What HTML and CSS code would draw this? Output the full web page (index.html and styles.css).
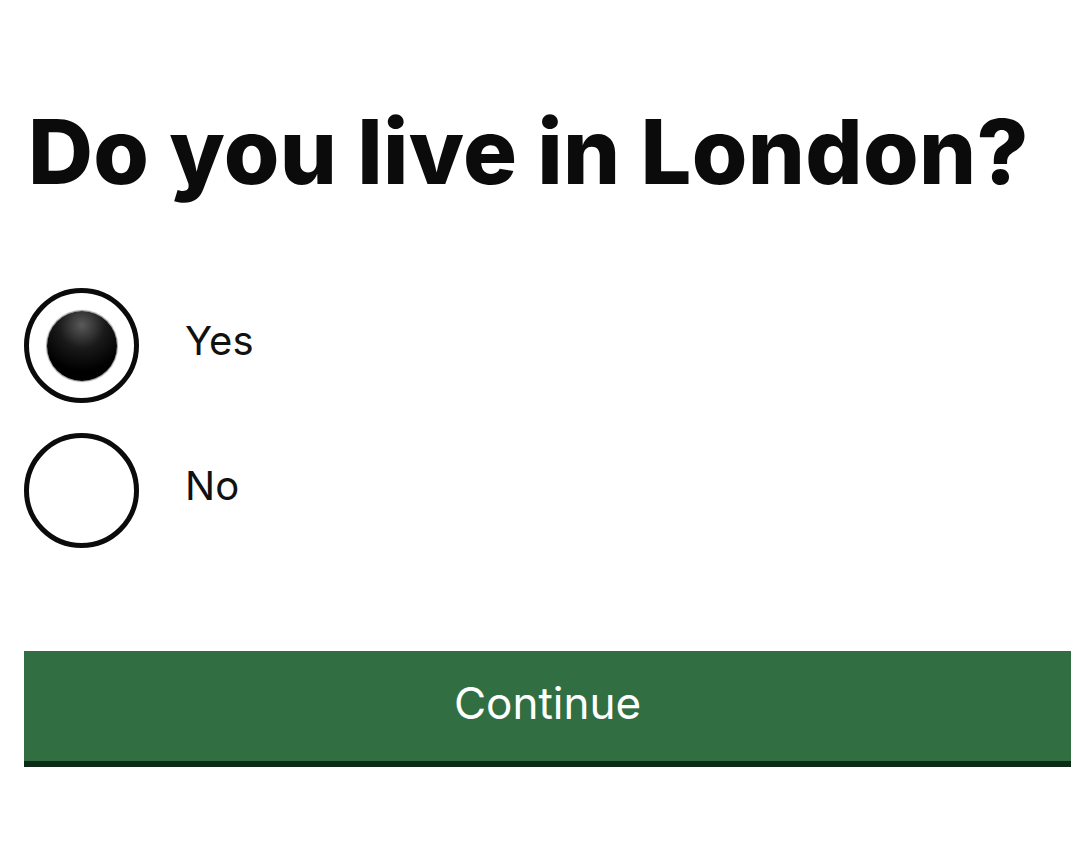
FILE: index.html
```html
<!DOCTYPE html>
<html lang="en">
<head>
<meta charset="utf-8">
<title>Do you live in London?</title>
<link rel="stylesheet" href="styles.css">
</head>
<body>
<main class="page">
  <h1 class="title">Do you live in London?</h1>
  <div class="options">
    <label class="option">
      <span class="radio checked"><span class="dot"></span></span>
      <span class="label">Yes</span>
    </label>
    <label class="option">
      <span class="radio"></span>
      <span class="label">No</span>
    </label>
  </div>
  <button class="continue" type="button">Continue</button>
</main>
</body>
</html>
```
FILE: styles.css
```css
html, body {
  margin: 0;
  padding: 0;
  background: #ffffff;
}
.page {
  padding: 102px 9px 0 24px;
  font-family: Inter, "Liberation Sans", sans-serif;
  color: #0b0b0b;
}
.title {
  margin: 0 0 0 4px;
  font-size: 90px;
  font-weight: 800;
  line-height: 100px;
  letter-spacing: 0.3px;
}
.options {
  display: flex;
  flex-direction: column;
  gap: 30px;
  margin-top: 86px;
}
.option {
  display: flex;
  align-items: center;
  gap: 46px;
}
.radio {
  box-sizing: border-box;
  width: 115px;
  height: 115px;
  border: 5px solid #0b0b0b;
  border-radius: 50%;
  display: flex;
  align-items: center;
  justify-content: center;
}
.dot {
  width: 70px;
  height: 70px;
  border-radius: 50%;
  background: radial-gradient(circle at 50% 20%, #5a5a5a 0%, #1a1a1a 35%, #000 70%);
  box-shadow: 0 0 1px 1px rgba(0,0,0,0.4);
}
.label {
  font-size: 40px;
  font-weight: 400;
  color: #111;
  padding-bottom: 10px;
}
.continue {
  display: block;
  width: 100%;
  height: 116px;
  margin-top: 103px;
  padding: 0 0 6px;
  background: #316f42;
  border: 0;
  border-bottom: 6px solid #0f2a17;
  color: #ffffff;
  font-family: Inter, "Liberation Sans", sans-serif;
  font-size: 44px;
  font-weight: 400;
}
```
